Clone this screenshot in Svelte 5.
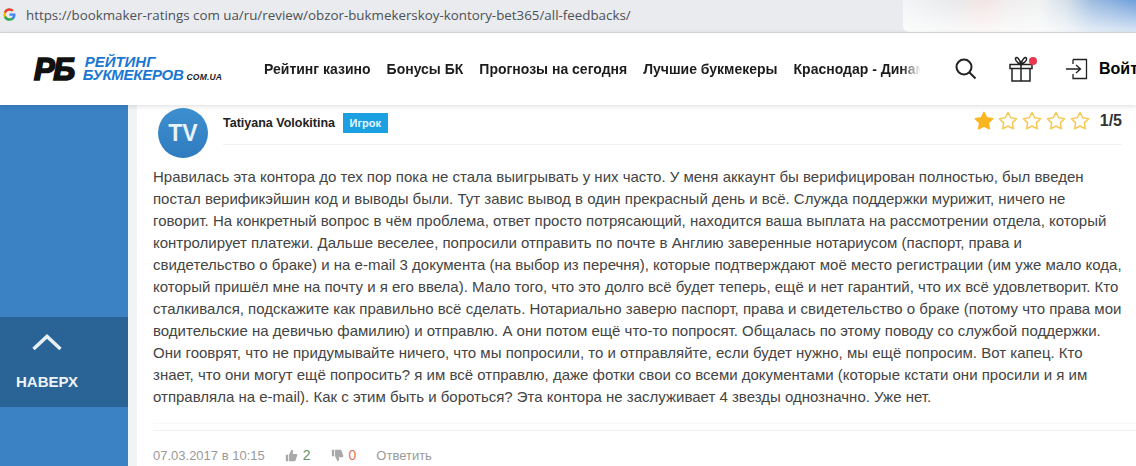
<script>
	const nav = ['Рейтинг казино', 'Бонусы БК', 'Прогнозы на сегодня', 'Лучшие букмекеры', 'Краснодар - Динамо'];
	const lines = [
		'Нравилась эта контора до тех пор пока не стала выигрывать у них часто. У меня аккаунт бы верифицирован полностью, был введен',
		'постал верификэйшин код и выводы были. Тут завис вывод в один прекрасный день и всё. Служда поддержки мурижит, ничего не',
		'говорит. На конкретный вопрос в чём проблема, ответ просто потрясающий, находится ваша выплата на рассмотрении отдела, который',
		'контролирует платежи. Дальше веселее, попросили отправить по почте в Англию заверенные нотариусом (паспорт, права и',
		'свидетельство о браке) и на e-mail 3 документа (на выбор из перечня), которые подтверждают моё место регистрации (им уже мало кода,',
		'который пришёл мне на почту и я его ввела). Мало того, что это долго всё будет теперь, ещё и нет гарантий, что их всё удовлетворит. Кто',
		'сталкивался, подскажите как правильно всё сделать. Нотариально заверю паспорт, права и свидетельство о браке (потому что права мои',
		'водительские на девичью фамилию) и отправлю. А они потом ещё что-то попросят. Общалась по этому поводу со службой поддержки.',
		'Они гооврят, что не придумывайте ничего, что мы попросили, то и отправляйте, если будет нужно, мы ещё попросим. Вот капец. Кто',
		'знает, что они могут ещё попросить? я им всё отправлю, даже фотки свои со всеми документами (которые кстати они просили и я им',
		'отправляла на e-mail). Как с этим быть и бороться? Эта контора не заслуживает 4 звезды однозначно. Уже нет.'
	];
	const star = 'M12 2.5L14.94 8.45 21.5 9.4 16.76 14.05 17.9 20.6 12 17.5 6.1 20.6 7.24 14.05 2.5 9.4 9.06 8.45z';
</script>

<div class="page">
	<div class="browser">
		<svg class="g" viewBox="0 0 24 24" width="15" height="15">
			<path d="M21.6 12.2c0-.7-.1-1.4-.2-2H12v3.9h5.4a4.6 4.6 0 0 1-2 3v2.5h3.2c1.9-1.7 3-4.3 3-7.4z" fill="#4285f4" />
			<path d="M12 22c2.7 0 5-.9 6.6-2.4l-3.2-2.5c-.9.6-2 1-3.4 1-2.6 0-4.8-1.8-5.6-4.1H3.1v2.6A10 10 0 0 0 12 22z" fill="#34a853" />
			<path d="M6.4 14c-.2-.6-.3-1.3-.3-2s.1-1.4.3-2V7.400H3.100a10 10 0 0 0 0 9.200z" fill="#fbbc05" />
			<path d="M12 6c1.500 0 2.800.5 3.800 1.500l2.900-2.900A10 10 0 0 0 3.100 7.400L6.400 10C7.200 7.700 9.400 6 12 6z" fill="#ea4335" />
		</svg>
		<span class="url">https://bookmaker-ratings com ua/ru/review/obzor-bukmekerskoy-kontory-bet365/all-feedbacks/</span>
		<div class="blur"></div>
	</div>

	<header>
		<div class="logo">
			<span class="mark">РБ</span>
			<div class="words">
				<span>РЕЙТИНГ</span>
				<span>БУКМЕКЕРОВ<small>COM.UA</small></span>
			</div>
		</div>
		<nav>
			{#each nav as item}
				<span>{item}</span>
			{/each}
		</nav>
		<svg class="search" viewBox="0 0 22 22" width="22" height="22" fill="none" stroke="#222" stroke-width="2">
			<circle cx="9" cy="9" r="7.500" />
			<path d="M14.500 14.500l6 6" />
		</svg>
		<div class="gift">
			<svg viewBox="0 0 28 28" width="28" height="28" fill="none" stroke="#222" stroke-width="1.500">
				<path d="M3 9.500h22v4H3zM5 13.500V26h18V13.500M14 9.500V26M14 9.500C11 8 8 6 8.500 3.500 9.500 1 13 4 14 9.500zM14 9.500c1-5.500 4.500-8.500 5.500-6 .5 2.500-2.500 4.500-5.500 6z" />
			</svg>
			<i></i>
		</div>
		<div class="login">
			<svg viewBox="0 0 24 24" width="24" height="24" fill="none" stroke="#222" stroke-width="1.300">
				<path d="M7 2.500h13.500v19H7V17M7 7V2.500M0 12h14M10 8l4.500 4-4.500 4" />
			</svg>
			<b>Войти</b>
		</div>
	</header>

	<div class="content">
		<aside>
			<div class="up">
				<svg viewBox="0 0 30 20" width="30" height="20" fill="none" stroke="#e8f0f6" stroke-width="3.500">
					<path d="M1.500 17L15 4.500l13.500 12.500" />
				</svg>
				<span>НАВЕРХ</span>
			</div>
		</aside>
		<main>
			<div class="head">
				<div class="avatar">TV</div>
				<div class="who">
					<div class="name"><b>Tatiyana Volokitina</b><em>Игрок</em></div>
					<div class="rate">
						{#each [0, 1, 2, 3, 4] as i}
							<svg viewBox="1 1 22 22" width="20" height="20" fill={i === 0 ? '#fbb61f' : '#fff'} stroke={i === 0 ? '#fbb61f' : '#f5c851'} stroke-width="1.600" stroke-linejoin="round">
								<path d={star} />
							</svg>
						{/each}
						<strong>1/5</strong>
					</div>
				</div>
			</div>
			<div class="text">
				{#each lines as line}
					<div>{line}</div>
				{/each}
			</div>
			<div class="foot">
				<span class="date">07.03.2017 в 10:15</span>
				<span class="vote">
					<svg viewBox="0 0 16 16" width="13" height="13" fill="#a9a9a9"><path d="M1 7h3v8H1zM5 7l3-6c1.500 0 2 1 2 2l-.5 3H14c1 0 1.500 1 1 2l-2 6c-.3.700-.700 1-1.500 1H5z" /></svg>
					<span class="plus">2</span>
				</span>
				<span class="vote">
					<svg viewBox="0 0 16 16" width="13" height="13" fill="#a9a9a9"><path d="M1 1h3v8H1zM5 9l3 6c1.500 0 2-1 2-2l-.5-3H14c1 0 1.500-1 1-2l-2-6c-.3-.700-.700-1-1.500-1H5z" /></svg>
					<span class="minus">0</span>
				</span>
				<span class="reply">Ответить</span>
			</div>
		</main>
	</div>
</div>

<style>
	:global(body) {
		margin: 0;
		overflow: hidden;
		background: #fff;
	}

	.page {
		width: 1136px;
		height: 466px;
		overflow: hidden;
		font-family: 'Liberation Sans', Arial, sans-serif;
		display: flex;
		flex-direction: column;
	}

	.browser {
		flex: none;
		background: #e9ebee;
		border-bottom: 1px solid #d8dadc;
		display: flex;
		align-items: center;
		padding-left: 2px;
		gap: 9px;
		position: relative;
		padding-bottom: 3px;
		box-sizing: border-box;
		height: 33px;
	}

	.g {
		flex: none;
	}

	.url {
		font-family: 'Open Sans', sans-serif;
		font-size: 13.350px;
		color: #4d5156;
		white-space: nowrap;
	}

	/* smeared-out toolbar area at the right of the address bar */
	.blur {
		position: absolute;
		right: 0;
		top: 0;
		bottom: 0;
		width: 233px;
		border-radius: 0 0 0 6px;
		background:
			linear-gradient(180deg, rgba(255, 255, 255, 0) 0%, rgba(255, 255, 255, 0.75) 100%),
			linear-gradient(90deg, #f3f5f6 0%, #e8eaec 20%, #f3e4e4 34%, #f1eeee 46%, #eef1f2 59%, #d5e0ea 70%, #9dbde0 81%, #6f9fdc 100%);
	}

	header {
		height: 72px;
		flex: none;
		background: #fff;
		display: flex;
		align-items: center;
		position: relative;
		z-index: 1;
		box-shadow: 0 1px 5px rgba(0, 0, 0, 0.14);
		padding-left: 34px;
	}

	.logo {
		display: flex;
		align-items: center;
		width: 230px;
		flex: none;
		gap: 9px;
	}

	.mark {
		font-size: 31px;
		font-weight: 700;
		font-style: italic;
		color: #111;
		-webkit-text-stroke: 1.700px #111;
		letter-spacing: -1.500px;
		line-height: 1;
	}

	.words {
		display: flex;
		flex-direction: column;
		color: #1a78d2;
		font-size: 15px;
		line-height: 13px;
		font-weight: 700;
		font-style: italic;
		letter-spacing: -0.300px;
	}

	.words span:first-child {
		margin-left: 2px;
		letter-spacing: 0;
	}

	.words small {
		font-size: 8.500px;
		letter-spacing: 0.200px;
		color: #222;
		margin-left: 3px;
	}

	nav {
		width: 657px;
		flex: none;
		display: flex;
		gap: 16px;
		overflow: hidden;
		font-size: 14px;
		font-weight: 700;
		color: #1c1c1c;
		white-space: nowrap;
		-webkit-mask-image: linear-gradient(90deg, #000 97%, transparent 100%);
		mask-image: linear-gradient(90deg, #000 97%, transparent 100%);
	}

	.search {
		flex: none;
		margin-left: 34px;
	}

	.gift {
		flex: none;
		margin-left: 30px;
		position: relative;
		height: 28px;
	}

	.gift i {
		position: absolute;
		right: -2px;
		top: 2px;
		width: 8px;
		height: 8px;
		border-radius: 50%;
		background: #e8384f;
	}

	.login {
		display: flex;
		align-items: center;
		gap: 9px;
		margin-left: 31px;
		flex: none;
		font-size: 16px;
		white-space: nowrap;
	}

	.content {
		flex: 1;
		display: flex;
		min-height: 0;
		background: #f0f4f5;
	}

	aside {
		width: 128px;
		flex: none;
		background: #3a82c4;
		padding-top: 212px;
		box-sizing: border-box;
	}

	.up {
		height: 90px;
		background: #2a6496;
		display: flex;
		flex-direction: column;
		align-items: flex-start;
		color: #eef3f8;
		font-size: 15px;
		font-weight: 700;
		padding: 15px 0 0 16px;
		box-sizing: border-box;
		gap: 21px;
	}

	.up svg {
		margin-left: 16px;
	}

	main {
		margin-left: 9px;
		flex: 1;
		background: #fff;
		padding: 3px 0 0 16px;
		min-width: 0;
	}

	.head {
		display: flex;
		height: 58px;
	}

	.avatar {
		width: 50px;
		height: 50px;
		border-radius: 50%;
		background: linear-gradient(#3d8fd0, #2f7cbf);
		color: #e9f2f9;
		font-size: 23px;
		font-weight: 700;
		display: flex;
		align-items: center;
		justify-content: center;
		margin-left: 5px;
		flex: none;
	}

	.who {
		margin: 0 14px 0 15px;
		flex: 1;
		height: 36px;
		border-bottom: 1px solid #f2f2f2;
		display: flex;
		justify-content: space-between;
		align-items: flex-start;
	}

	.name {
		display: flex;
		align-items: center;
		height: 23px;
		margin-top: 3px;
		font-size: 12.500px;
		color: #222;
		gap: 8px;
	}

	.name em {
		background: #1ba0e2;
		color: #e8f6fd;
		font-style: normal;
		font-weight: 700;
		font-size: 11px;
		padding: 0 6.500px;
		height: 20px;
		line-height: 20px;
	}

	.rate {
		display: flex;
		align-items: center;
		gap: 4px;
		margin-top: 3px;
	}

	.rate strong {
		font-size: 16px;
		color: #333;
		margin-left: 6px;
	}

	.text {
		font-size: 15px;
		line-height: 22px;
		color: #444;
		white-space: nowrap;
		padding-bottom: 15px;
		border-bottom: 1px solid #f9f9f9;
	}

	.foot {
		margin-top: 6px;
		border-top: 1px solid #f2f2f2;
		padding-top: 16px;
		display: flex;
		align-items: center;
		font-size: 13px;
		color: #9a9a9a;
	}

	.vote {
		display: flex;
		align-items: center;
		gap: 5px;
		margin-left: 20px;
	}

	.plus,
	.minus {
		font-size: 14px;
	}

	.plus {
		color: #5f9472;
	}

	.minus {
		color: #e0735c;
	}

	.reply {
		margin-left: 20px;
	}
</style>
